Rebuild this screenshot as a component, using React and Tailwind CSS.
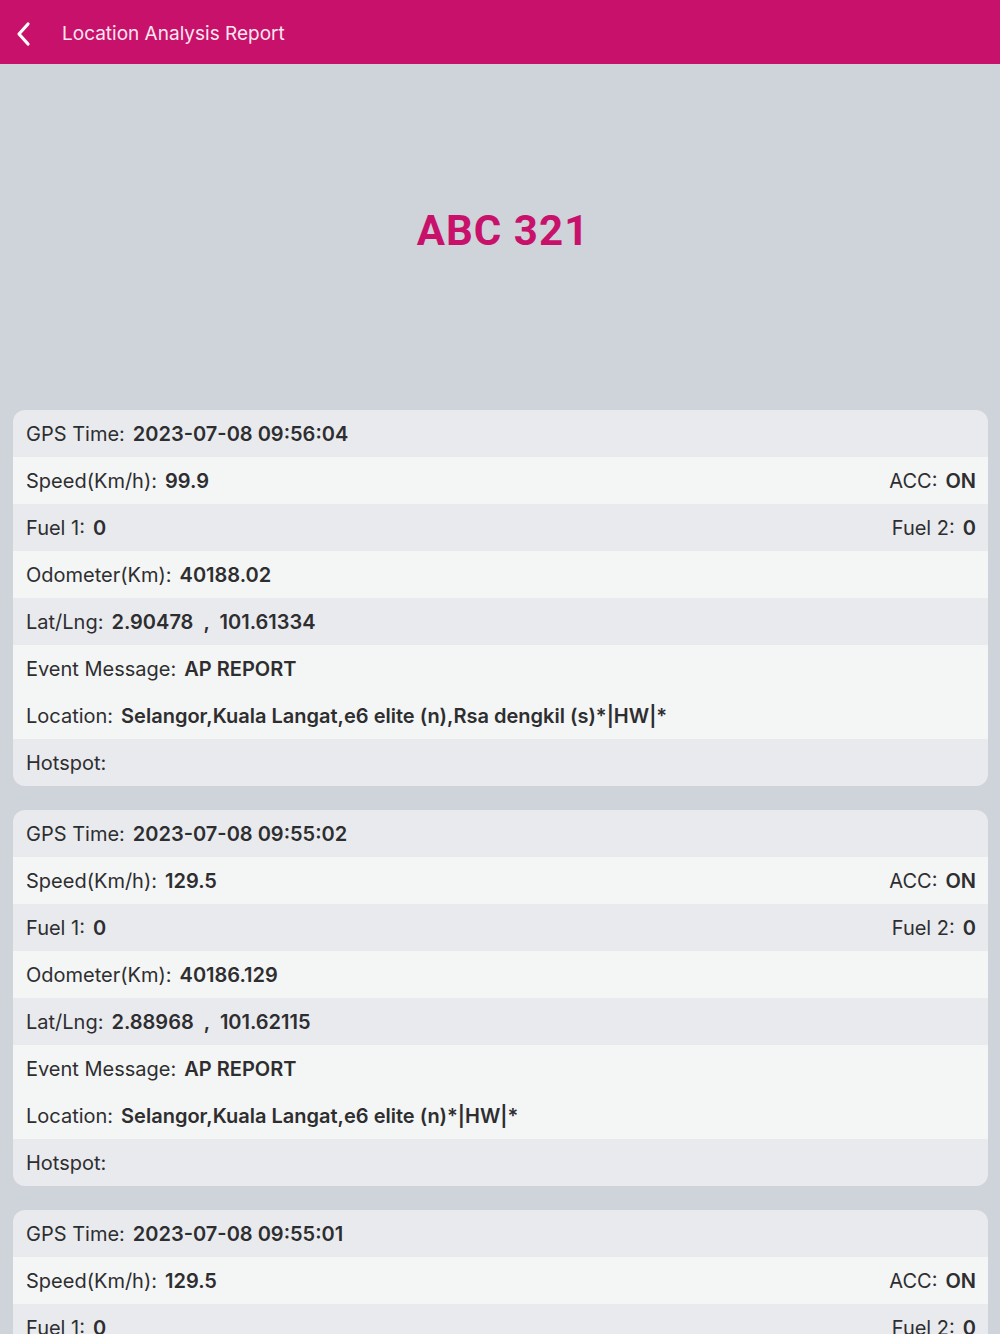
import React from 'react'

const records = [
  {
    time: '2023-07-08 09:56:04',
    speed: '99.9',
    acc: 'ON',
    fuel1: '0',
    fuel2: '0',
    odo: '40188.02',
    lat: '2.90478',
    lng: '101.61334',
    event: 'AP REPORT',
    location: 'Selangor,Kuala Langat,e6 elite (n),Rsa dengkil (s)*|HW|*',
  },
  {
    time: '2023-07-08 09:55:02',
    speed: '129.5',
    acc: 'ON',
    fuel1: '0',
    fuel2: '0',
    odo: '40186.129',
    lat: '2.88968',
    lng: '101.62115',
    event: 'AP REPORT',
    location: 'Selangor,Kuala Langat,e6 elite (n)*|HW|*',
  },
  {
    time: '2023-07-08 09:55:01',
    speed: '129.5',
    acc: 'ON',
    fuel1: '0',
    fuel2: '0',
    odo: '40186.1',
    lat: '2.88940',
    lng: '101.62130',
    event: 'AP REPORT',
    location: 'Selangor,Kuala Langat,e6 elite (n)*|HW|*',
  },
]

// Field() - label and bold value pair
function Field({ label, value }) {
  return (
    <span className="flex items-baseline gap-2">
      <span>{label}</span>
      <span className="font-semibold whitespace-pre">{value}</span>
    </span>
  )
}

// Row() - one line of a record card
function Row({ dark, children }) {
  return (
    <div
      className={`h-[47px] flex items-center justify-between pl-[13px] pr-3 ${
        dark ? 'bg-[#e9eaee]' : 'bg-[#f4f5f5]'
      }`}
    >
      {children}
    </div>
  )
}

function RecordCard({ r }) {
  return (
    <div className="rounded-xl overflow-hidden">
      <Row dark>
        <Field label="GPS Time:" value={r.time} />
      </Row>
      <Row>
        <Field label="Speed(Km/h):" value={r.speed} />
        <Field label="ACC:" value={r.acc} />
      </Row>
      <Row dark>
        <Field label="Fuel 1:" value={r.fuel1} />
        <Field label="Fuel 2:" value={r.fuel2} />
      </Row>
      <Row>
        <Field label="Odometer(Km):" value={r.odo} />
      </Row>
      <Row dark>
        <Field label="Lat/Lng:" value={`${r.lat}  ,  ${r.lng}`} />
      </Row>
      <Row>
        <Field label="Event Message:" value={r.event} />
      </Row>
      <Row>
        <Field label="Location:" value={r.location} />
      </Row>
      <Row dark>
        <Field label="Hotspot:" value="" />
      </Row>
    </div>
  )
}

export default function App() {
  return (
    <div
      className="w-[1000px] h-[1334px] overflow-hidden bg-[#cfd3da] text-[20px] text-[#2e2e30]"
      style={{ fontFamily: 'Inter, "Noto Sans", sans-serif' }}
    >
      {/* header bar */}
      <div className="h-16 bg-[#c8116a] flex items-center text-white pt-1">
        <svg className="ml-[13px] w-[22px] h-[26px]" viewBox="0 0 22 26" fill="none" stroke="white" strokeWidth="3.2" strokeLinecap="round" strokeLinejoin="round">
          <path d="M15 3 6 13l9 10" />
        </svg>
        <span className="ml-[27px] text-[19px] text-[#fbe6f0]">Location Analysis Report</span>
      </div>

      {/* plate number */}
      <div className="h-[346px] flex items-center justify-center pb-[14px] pl-[6px]">
        <h1
          className="text-[42px] font-bold text-[#c8116a] tracking-wide"
          style={{ fontFamily: 'Roboto, sans-serif' }}
        >
          ABC 321
        </h1>
      </div>

      <div className="ml-[13px] mr-[12px] flex flex-col gap-6">
        {records.map((r, i) => (
          <RecordCard key={i} r={r} />
        ))}
      </div>
    </div>
  )
}
